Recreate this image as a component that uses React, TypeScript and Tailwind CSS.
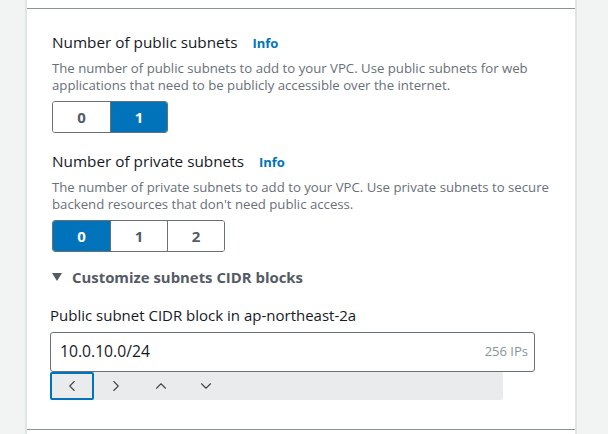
import React from 'react';
import { ChevronLeft, ChevronRight, ChevronUp, ChevronDown } from 'lucide-react';

const font = { fontFamily: '"Open Sans", "Noto Sans", sans-serif' };

interface SegmentedProps {
  options: string[];
  selected: string;
}

const Segmented: React.FC<SegmentedProps> = ({ options, selected }) => (
  <div className="flex h-[32px] w-fit rounded-[3px] border border-[#687078] overflow-hidden">
    {options.map((opt, i) => {
      const active = opt === selected;
      return (
        <div
          key={opt}
          className={
            'flex w-[57px] items-center justify-center text-[15px] font-bold ' +
            (i > 0 ? 'border-l border-[#687078] ' : '') +
            (active ? 'bg-[#0073bb] text-white border-[#1b2a38]' : 'bg-white text-[#545b64]')
          }
        >
          {opt}
        </div>
      );
    })}
  </div>
);

interface FieldProps {
  title: string;
  desc: string[];
  options: string[];
  selected: string;
}

const SubnetField: React.FC<FieldProps> = ({ title, desc, options, selected }) => (
  <div>
    <div className="flex items-baseline gap-[15px] leading-[22px]">
      <span className="text-[15.3px] text-[#16191f]">{title}</span>
      <span className="text-[13px] font-bold text-[#0073bb]">Info</span>
    </div>
    <div className="mt-[6px] whitespace-nowrap text-[13.2px] leading-[17px] text-[#687078]">
      {desc.map((d) => (
        <div key={d}>{d}</div>
      ))}
    </div>
    <div className="mt-[7px]">
      <Segmented options={options} selected={selected} />
    </div>
  </div>
);

export default function App() {
  return (
    <div className="h-[434px] w-[608px] overflow-hidden bg-[#f2f3f3] pl-[25px]" style={font}>
      <div className="h-full w-[552px] border-x-2 border-[#e1e4e4] bg-white">
        <div className="h-[9px] border-b border-[#879596]" />
        <div className="pl-[25px] pt-[22px]">
          <SubnetField
            title="Number of public subnets"
            desc={[
              'The number of public subnets to add to your VPC. Use public subnets for web',
              'applications that need to be publicly accessible over the internet.',
            ]}
            options={['0', '1']}
            selected="1"
          />
          <div className="mt-[17px]">
            <SubnetField
              title="Number of private subnets"
              desc={[
                'The number of private subnets to add to your VPC. Use private subnets to secure',
                "backend resources that don't need public access.",
              ]}
              options={['0', '1', '2']}
              selected="0"
            />
          </div>
          <div className="mt-[14px] flex items-center gap-[10px] leading-[22px]">
            <svg width="10" height="8" viewBox="0 0 10 8" className="text-[#545b64]">
              <path d="M0 0 H10 L5 8 Z" fill="currentColor" />
            </svg>
            <span className="text-[14.9px] font-bold text-[#545b64]">Customize subnets CIDR blocks</span>
          </div>
        </div>
        <div className="pl-[23px] pt-[16px]">
          <div className="text-[15px] leading-[22px] text-[#16191f]">
            Public subnet CIDR block in ap-northeast-2a
          </div>
          <div className="mt-[6px] flex h-[40px] w-[485px] items-center justify-between rounded-[3px] border border-[#687078] pl-[9px] pr-[6px]">
            <span className="text-[15.7px] text-[#16191f]">10.0.10.0/24</span>
            <span className="text-[13px] text-[#879596]">256 IPs</span>
          </div>
          <div className="flex h-[28px] w-[453px] items-center rounded-b-[3px] bg-[#e9ebed] text-[#414750]">
            <div className="flex h-[28px] w-[44px] items-center justify-center rounded-[2px] border-2 border-[#0073bb]">
              <ChevronLeft size={18} strokeWidth={1.5} />
            </div>
            <div className="flex w-[44px] items-center justify-center">
              <ChevronRight size={18} strokeWidth={1.5} />
            </div>
            <div className="flex w-[46px] items-center justify-center">
              <ChevronUp size={18} strokeWidth={1.5} />
            </div>
            <div className="flex w-[44px] items-center justify-center">
              <ChevronDown size={18} strokeWidth={1.5} />
            </div>
          </div>
        </div>
        <div className="mt-[29px] border-b border-[#879596]" />
      </div>
    </div>
  );
}
